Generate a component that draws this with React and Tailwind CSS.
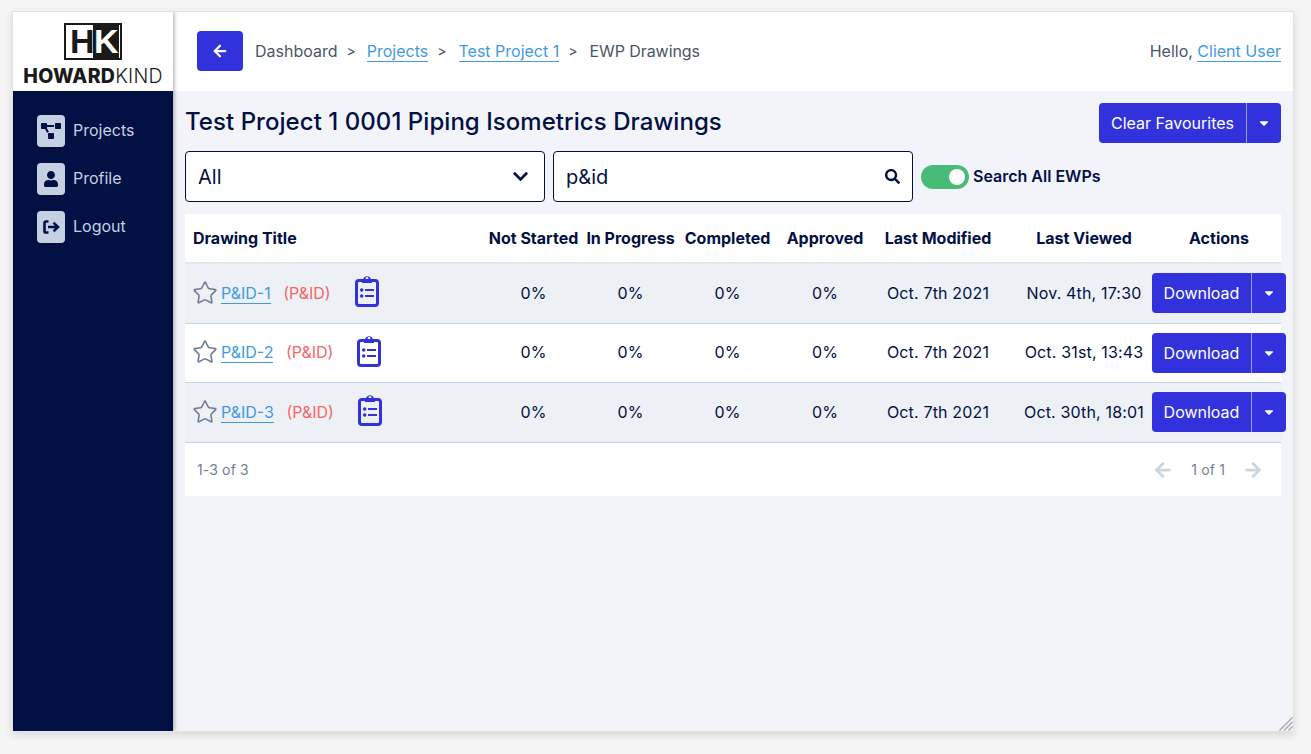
import { FaProjectDiagram, FaUser, FaSearch, FaChevronDown, FaCaretDown } from 'react-icons/fa';
import { ArrowLeft, ArrowRight, Star } from 'lucide-react';

const COLS = 'grid grid-cols-[300px_97px_97px_97px_98px_128px_150px_129px] items-center';

const rows = [
  { name: 'P&ID-1', viewed: 'Nov. 4th, 17:30', bg: 'bg-[#edf1f6]', h: 'h-[60px]' },
  { name: 'P&ID-2', viewed: 'Oct. 31st, 13:43', bg: 'bg-white', h: 'h-[59px]' },
  { name: 'P&ID-3', viewed: 'Oct. 30th, 18:01', bg: 'bg-[#edf1f6]', h: 'h-[60px]' },
];

function NavItem({ icon, label }) {
  return (
    <div className="flex items-center gap-2 h-8 text-[#c5d0e3] text-base">
      <span className="w-7 h-8 rounded-sm bg-[#c5d0e3] text-[#021044] flex items-center justify-center">{icon}</span>
      <span className="-mt-0.5">{label}</span>
    </div>
  );
}

function SplitButton({ label, labelWidth, arrowWidth }) {
  return (
    <div className="flex h-10 rounded bg-[#3232dc] text-white text-base">
      <span className={`${labelWidth} flex items-center justify-center border-r border-[#9a9ae8]`}>{label}</span>
      <span className={`${arrowWidth} flex items-center justify-center`}><FaCaretDown size={14} /></span>
    </div>
  );
}

function ClipboardIcon() {
  return (
    <svg width="24" height="33" viewBox="0 0 24 33" className="ml-6 -mt-1 shrink-0 text-[#3232dc]" fill="currentColor">
      <rect x="1.5" y="6.5" width="21" height="25" rx="2.5" fill="none" stroke="currentColor" strokeWidth="3" />
      <path fillRule="evenodd" d="M7 9V5h1.2a4 4 0 0 1 7.6 0H17v4zM12 3a1.4 1.4 0 1 0 0 2.8A1.4 1.4 0 0 0 12 3z" />
      <circle cx="6.7" cy="16" r="1.8" />
      <rect x="10" y="15" width="9" height="2" />
      <circle cx="6.7" cy="22" r="1.8" />
      <rect x="10" y="21" width="9" height="2" />
    </svg>
  );
}

function Logo() {
  return (
    <div className="h-[79px] bg-white flex flex-col items-center pt-[11px] text-[#1a1a1a] shrink-0">
      <div className="flex w-[58px] h-[37px] border-2 border-[#1a1a1a] font-['Liberation_Sans',sans-serif] font-bold text-[34px] leading-[33px]">
        <span className="w-[28px] bg-white pl-[4px]">H</span>
        <span className="w-[26px] bg-[#1a1a1a] text-white -ml-px pl-px">K</span>
      </div>
      <div className="mt-[4px] text-[19.5px] leading-6 whitespace-nowrap">
        <span className="font-extrabold tracking-[0.3px]">HOWARD</span><span className="font-light tracking-[0.2px]">KIND</span>
      </div>
    </div>
  );
}

export default function App() {
  return (
    <div className="min-h-[754px] bg-[#f5f5f5] pt-[11px] pl-3 font-['Inter',sans-serif]">
      <div className="relative w-[1282px] h-[721px] flex border border-[#e2e2e2] shadow-[0_3px_8px_rgba(0,0,0,0.12)] bg-[#f2f4fa] overflow-hidden">
        {/* Sidebar */}
        <aside className="w-40 shrink-0 flex flex-col bg-[#021044] shadow-[1px_0_4px_rgba(0,0,0,0.35)] z-10">
          <Logo />
          <nav className="flex flex-col gap-4 pt-6 pl-6">
            <NavItem label="Projects" icon={<FaProjectDiagram size={20} />} />
            <NavItem label="Profile" icon={<FaUser size={16} />} />
            <NavItem
              label="Logout"
              icon={
                <svg width="17" height="14" viewBox="0 0 17 14" fill="none" stroke="currentColor" strokeWidth="2.6">
                  <path d="M5.5 1.5H2.8a1.3 1.3 0 0 0-1.3 1.3v8.4a1.3 1.3 0 0 0 1.3 1.3h2.7" />
                  <path d="M5 7h10M10.5 2.6 15 7l-4.5 4.4" />
                </svg>
              }
            />
          </nav>
        </aside>

        <main className="flex-1 min-w-0 flex flex-col">
          {/* Header */}
          <header className="h-[79px] shrink-0 bg-white flex items-center pl-6 pr-3 pb-px text-base text-[#4a5568]">
            <button className="w-[46px] h-10 rounded-sm bg-[#3232dc] text-white flex items-center justify-center mr-3">
              <ArrowLeft size={18} strokeWidth={3} />
            </button>
            <span>Dashboard</span>
            <span className="ml-[9px] mr-[11px] text-sm">&gt;</span>
            <a className="text-[#4299e1] border-b border-[#4299e1] leading-[20px] mt-px">Projects</a>
            <span className="ml-[9px] mr-3 text-sm">&gt;</span>
            <a className="text-[#4299e1] border-b border-[#4299e1] leading-[20px] mt-px">Test Project 1</a>
            <span className="ml-[9px] mr-3 text-sm">&gt;</span>
            <span className="tracking-[-0.08px]">EWP Drawings</span>
            <span className="ml-auto">Hello, <a className="text-[#4299e1] border-b border-[#4299e1]">Client User</a></span>
          </header>

          <div className="pt-3 pl-3 pr-3 text-[#021044]">
            {/* Title row */}
            <div className="flex items-start justify-between h-[48px]">
              <h1 className="pt-px text-2xl font-medium leading-[36px] tracking-[0.05px]">Test Project 1 0001 Piping Isometrics Drawings</h1>
              <SplitButton label="Clear Favourites" labelWidth="w-[148px]" arrowWidth="w-[34px]" />
            </div>

            {/* Filters */}
            <div className="flex items-center gap-2 h-[51px]">
              <div className="w-[360px] h-[51px] rounded bg-white border border-[#021044] flex items-center justify-between pl-3 pr-[15px] text-[20px]">
                All
                <FaChevronDown size={17} />
              </div>
              <div className="w-[360px] h-[51px] rounded bg-white border border-[#021044] flex items-center justify-between pl-3 pr-3 text-[20px]">
                p&amp;id
                <FaSearch size={15} />
              </div>
              <div className="w-12 h-6 rounded-full bg-[#48bb78] flex items-center justify-end pr-1">
                <span className="w-4 h-4 rounded-full bg-white" />
              </div>
              <span className="-ml-1 -mt-0.5 text-base font-semibold">Search All EWPs</span>
            </div>

            {/* Table */}
            <div className="mt-3 w-[1096px]">
              <div className={`${COLS} h-[50px] bg-white border-b-2 border-[#e2e8f0] text-base font-bold text-center whitespace-nowrap`}>
                <span className="text-left pl-2">Drawing Title</span>
                <span>Not Started</span>
                <span>In Progress</span>
                <span>Completed</span>
                <span>Approved</span>
                <span>Last Modified</span>
                <span className="pl-[14px]">Last Viewed</span>
                <span className="w-[134px]">Actions</span>
              </div>
              {rows.map((row) => (
                <div key={row.name} className={`${COLS} ${row.h} ${row.bg} border-b border-[#c5d5e5] text-base text-center whitespace-nowrap`}>
                  <div className="flex items-center pl-[7px] pb-0.5 text-left">
                    <Star size={26} strokeWidth={1.5} className="text-[#718096] shrink-0" />
                    <a className="ml-[3px] text-[#4299e1] border-b border-[#4299e1] leading-[20px] mt-px">{row.name}</a>
                    <span className="ml-[12.5px] text-[#f56565]">(P&amp;ID)</span>
                    <ClipboardIcon />
                  </div>
                  <span className="pb-0.5">0%</span>
                  <span className="pb-0.5">0%</span>
                  <span className="pb-0.5">0%</span>
                  <span className="pb-0.5">0%</span>
                  <span className="pb-0.5 tracking-[0.01em]">Oct. 7th 2021</span>
                  <span className="pb-0.5 pl-[14px] tracking-[0.01em]">{row.viewed}</span>
                  <div className="w-[134px] pb-px">
                    <SplitButton label="Download" labelWidth="w-[100px]" arrowWidth="w-[34px]" />
                  </div>
                </div>
              ))}
              <div className="h-[53px] bg-white flex items-center justify-between pl-3 pr-[17px] text-sm text-[#718096] tracking-[0.01em]">
                <span>1-3 of 3</span>
                <div className="flex items-center gap-[17px] text-[#cbd5e0]">
                  <ArrowLeft size={22} strokeWidth={3} />
                  <span className="text-[#718096]">1 of 1</span>
                  <ArrowRight size={22} strokeWidth={3} />
                </div>
              </div>
            </div>
          </div>
        </main>

        {/* Resize grip */}
        <svg width="14" height="14" viewBox="0 0 14 14" className="absolute right-0 bottom-0 text-[#a8a8ae]" fill="none" stroke="currentColor" strokeWidth="1.4">
          <path d="M0.5 13.5 13.5 0.5M5 13.5 13.5 5M9.5 13.5 13.5 9.5" />
        </svg>
      </div>
    </div>
  );
}
